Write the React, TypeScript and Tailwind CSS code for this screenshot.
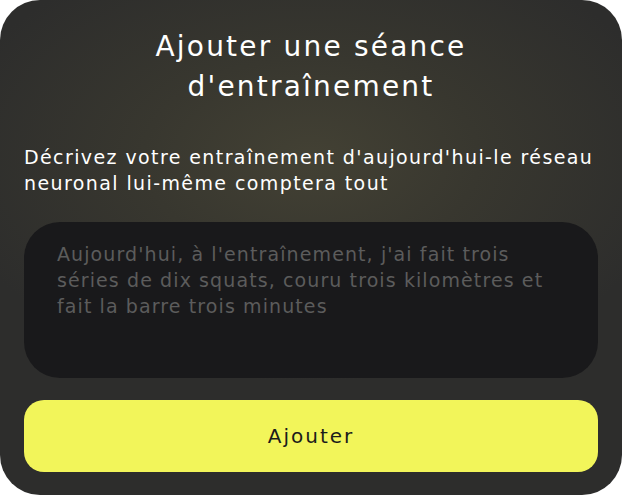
import React from "react";

function AddWorkoutModal() {
   return (
      <div className="min-h-[497px] w-[622px] bg-white">
         <div className="flex h-[495px] w-[622px] flex-col rounded-[40px] bg-[#2d2d2c] bg-[radial-gradient(ellipse_60%_45%_at_50%_32%,#434134_0%,#38372f_45%,#2d2d2c_100%)] px-6 pt-[27px] font-['DejaVu_Sans',sans-serif]">
            {/* title */}
            <h1 className="text-center text-[28px] leading-[40px] tracking-[2.2px] text-white">
               Ajouter une séance
               <br />
               d'entraînement
            </h1>

            {/* description */}
            <p className="mt-[37px] text-[19px] leading-[26px] tracking-[1.4px] text-white">
               Décrivez votre entraînement d'aujourd'hui-le réseau neuronal lui-même comptera tout
            </p>

            {/* input field */}
            <textarea
               className="mt-[26px] h-[156px] w-full resize-none rounded-[36px] bg-[#19191b] px-[33px] pt-[19px] text-[19px] leading-[26px] tracking-[1.1px] text-white outline-none placeholder:text-[#5c5c5c]"
               placeholder="Aujourd'hui, à l'entraînement, j'ai fait trois séries de dix squats, couru trois kilomètres et fait la barre trois minutes"
            />

            {/* submit */}
            <button className="mt-[22px] h-[72px] w-full rounded-[20px] bg-[#f2f55a] text-[20px] tracking-[2px] text-[#1b1b1b]">
               Ajouter
            </button>
         </div>
      </div>
   );
}

export default function App() {
   return <AddWorkoutModal />;
}
